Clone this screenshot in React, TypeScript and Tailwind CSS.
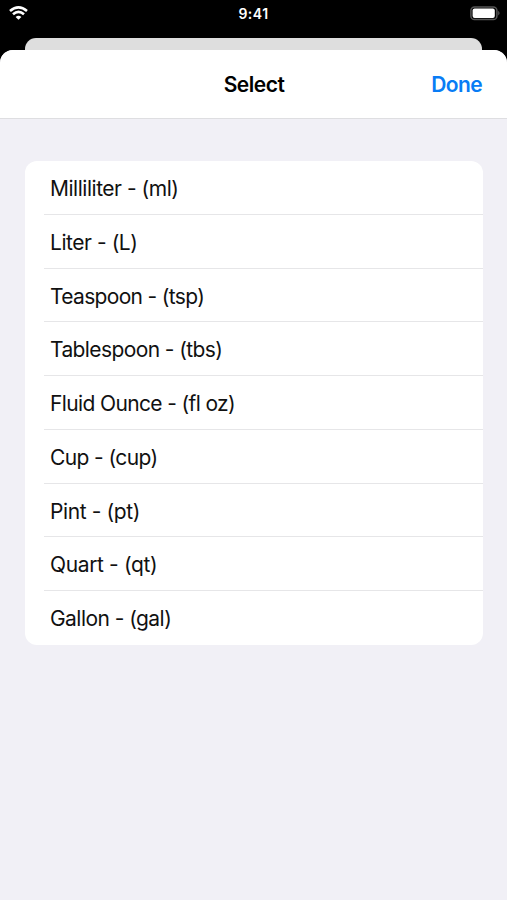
const units = [
  { name: "Milliliter - (ml)", tracking: "tracking-[-0.48px]" },
  { name: "Liter - (L)", tracking: "tracking-[-0.45px]" },
  { name: "Teaspoon - (tsp)", tracking: "tracking-[-0.67px]" },
  { name: "Tablespoon - (tbs)", tracking: "tracking-[-0.6px]" },
  { name: "Fluid Ounce - (fl oz)", tracking: "tracking-[-0.63px]" },
  { name: "Cup - (cup)", tracking: "tracking-[-0.6px]" },
  { name: "Pint - (pt)", tracking: "tracking-[-0.4px]" },
  { name: "Quart - (qt)", tracking: "tracking-[-0.36px]" },
  { name: "Gallon - (gal)", tracking: "tracking-[-0.55px]" },
];

function StatusBar() {
  return (
    <div className="grid h-[38px] shrink-0 grid-cols-3 items-start pl-[9px] pr-[6px] text-white">
      <svg className="mt-[5px] h-[16px] w-[20px]" viewBox="0 0 20 16" fill="none" stroke="white" strokeWidth="2.6">
        <path d="M1 6Q9.5-1.2 18 6" />
        <path d="M4 9.3Q9.5 4.4 15 9.3" />
        <path d="M6.6 12Q9.5 9.4 12.4 12L9.5 14.8Z" fill="white" stroke="none" />
      </svg>
      <span className="mt-[4px] pr-[3px] text-center text-[14px] font-semibold leading-5 tracking-[0.5px]">9:41</span>
      <svg className="mt-[6px] h-[15px] w-[31px] justify-self-end" viewBox="0 0 31 15">
        <rect x="0.9" y="0.9" width="26" height="12.6" rx="3.6" fill="none" stroke="#555" strokeWidth="1.5" />
        <rect x="2.6" y="2.4" width="22.2" height="9.6" rx="2" fill="white" />
        <path d="M28.2 4.8Q31 7.2 28.2 9.6Z" fill="#555" />
      </svg>
    </div>
  );
}

export default function App() {
  return (
    <div className="flex h-[900px] w-[507px] flex-col overflow-hidden bg-black font-['Inter',sans-serif] text-black">
      <StatusBar />
      <div className="mx-[25px] h-[12px] shrink-0 rounded-t-[11px] bg-[#dedede]" />
      <main className="flex min-h-0 flex-1 flex-col overflow-hidden rounded-t-[13px] bg-[#f1f0f6]">
        <header className="grid h-[69px] shrink-0 grid-cols-3 items-center border-b border-[#dedee1] bg-white px-[25px] pt-[2px] text-[21px]">
          <span />
          <h1 className="pl-[1px] text-center font-semibold tracking-[-0.5px]">Select</h1>
          <button className="justify-self-end font-semibold tracking-[-0.6px] text-[#087cf5]">Done</button>
        </header>
        <ul className="ml-[25px] mr-[24px] mt-[42px] overflow-hidden rounded-[12px] bg-white text-[21px] text-[#111]">
          {units.map(({ name, tracking }) => (
            <li key={name} className="group h-[53.75px] pl-[19px]">
              <div className="flex h-full items-center border-b border-[#e6e6e8] pl-[6px] pt-[2.8px] group-last:border-b-0 group-last:pt-[2px]">
                <span className={tracking}>{name}</span>
              </div>
            </li>
          ))}
        </ul>
      </main>
    </div>
  );
}
